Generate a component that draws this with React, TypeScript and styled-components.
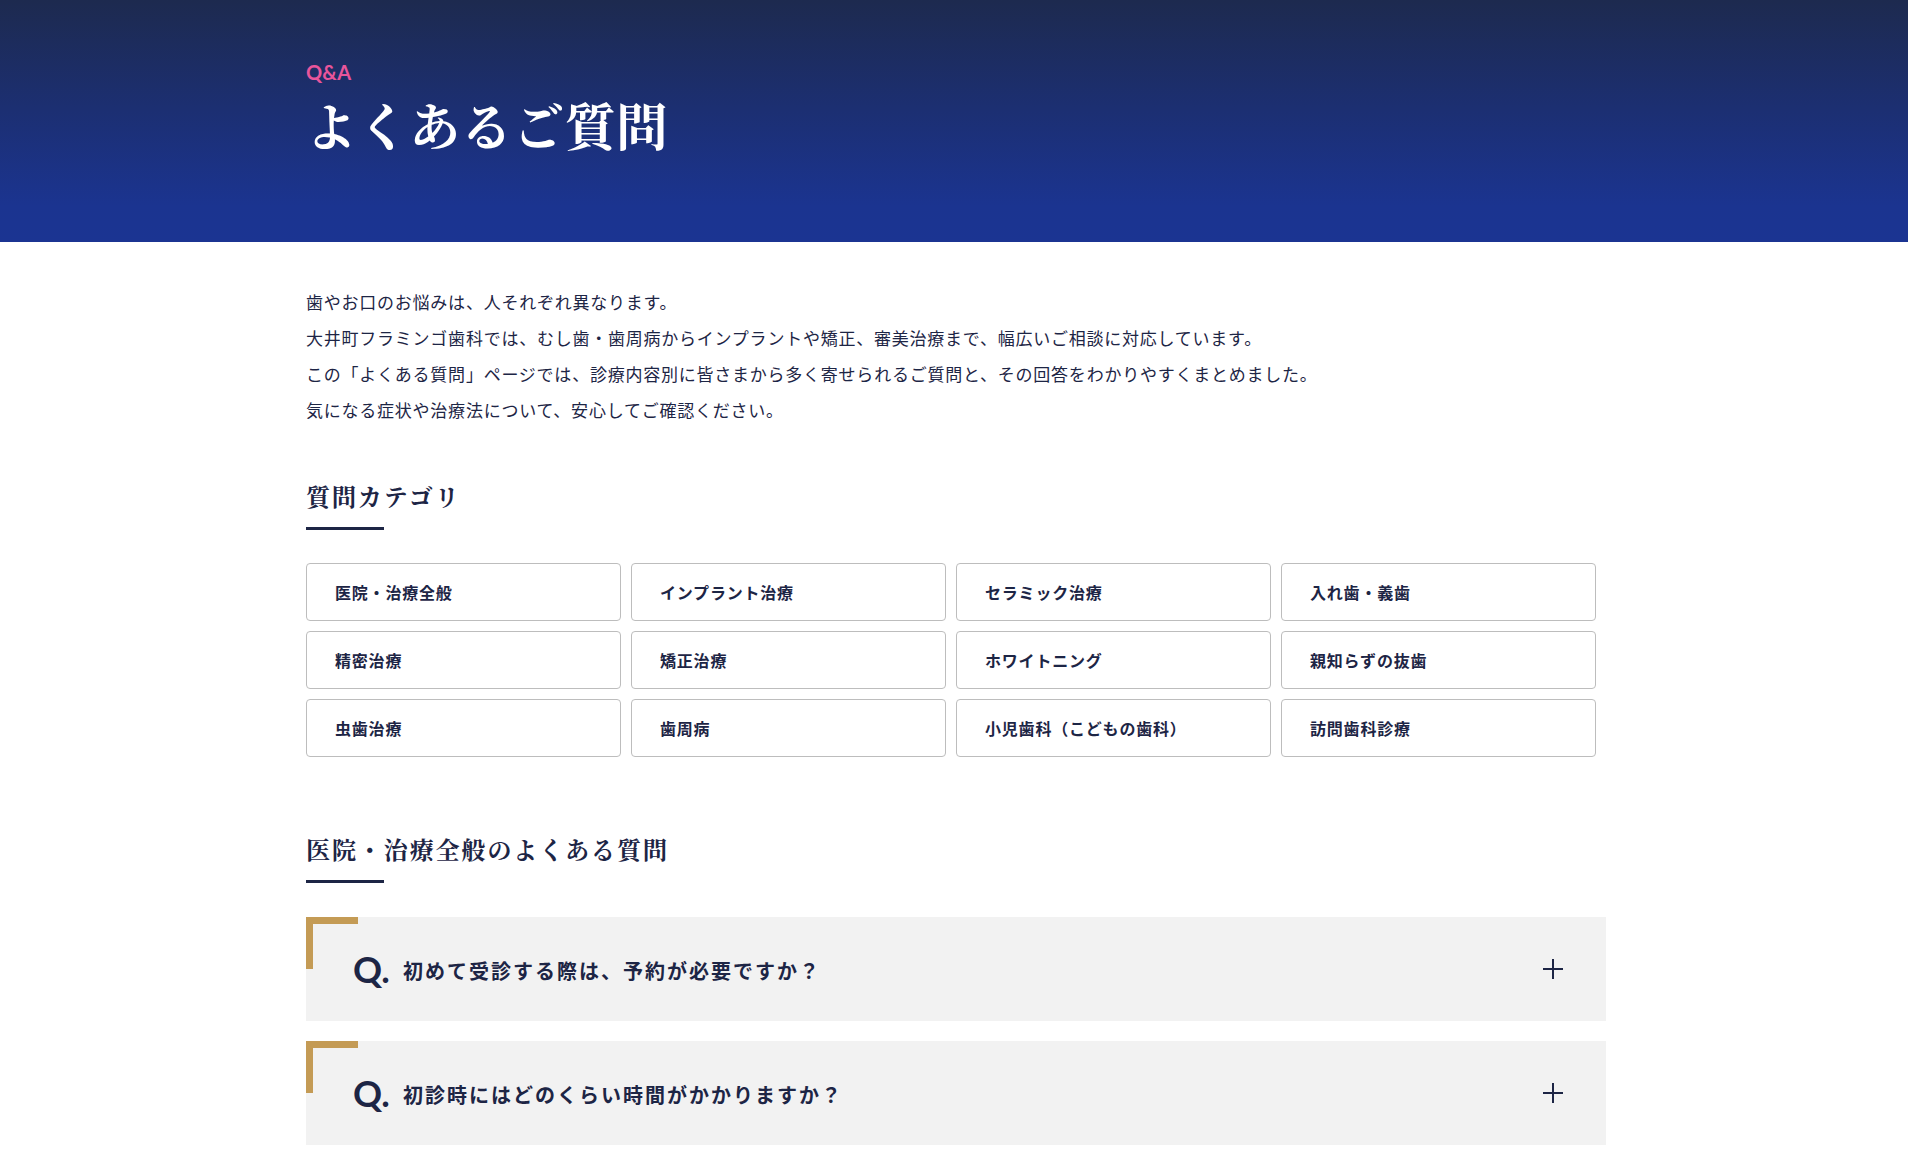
import React from "react";
import styled, { createGlobalStyle } from "styled-components";

const navy = "#1d2545";
const gold = "#c49b55";
const serif = `"Noto Serif CJK JP", "Noto Serif JP", "IPAMincho", "Hiragino Mincho ProN", "Yu Mincho", serif`;
const sans = `"Noto Sans CJK JP", "Noto Sans", sans-serif`;

const GlobalStyle = createGlobalStyle`
  html, body { margin: 0; padding: 0; background: #fff; }
  body { font-family: ${sans}; color: ${navy}; -webkit-font-smoothing: antialiased; }
  *, *::before, *::after { box-sizing: border-box; }
`;

const Hero = styled.header`
  height: 242px;
  padding-top: 60px;
  background: linear-gradient(180deg, #1d2a4f 0%, #1c2f72 45%, #1b3490 85%, #1b3492 100%);
`;

const Container = styled.div`
  width: 1300px;
  margin-left: calc(50% - 648px);
`;

const Eyebrow = styled.p`
  margin: 0;
  font-family: Lato, "Noto Sans", sans-serif;
  font-size: 20px;
  line-height: 24px;
  font-weight: 700;
  color: #e8559b;
`;

const HeroTitle = styled.h1`
  margin: 5px 0 0;
  font-family: ${serif};
  font-size: 51px;
  line-height: 70px;
  font-weight: 700;
  color: #fff;
  letter-spacing: 0.015em;
`;

const Main = styled(Container)`
  padding: 42px 0 12px;
`;

const Intro = styled.div`
  font-size: 17px;
  line-height: 36px;
  letter-spacing: 0.045em;
  font-weight: 400;
  p { margin: 0; }
`;

const SectionTitle = styled.h2<{ $mt: number }>`
  margin: ${(p) => p.$mt}px 0 0;
  font-family: ${serif};
  font-size: 24px;
  line-height: 36px;
  font-weight: 700;
  letter-spacing: 0.08em;
  color: ${navy};
  &::after {
    content: "";
    display: block;
    width: 78px;
    height: 3px;
    margin-top: 13px;
    background: ${navy};
  }
`;

const CategoryGrid = styled.div`
  display: grid;
  grid-template-columns: repeat(4, 315px);
  gap: 10px;
  margin-top: 33px;
`;

const CategoryButton = styled.button`
  height: 58px;
  display: flex;
  align-items: center;
  padding: 0 28px;
  background: #fff;
  border: 1px solid #bdbdbd;
  border-radius: 4px;
  font-family: ${sans};
  font-size: 16px;
  font-weight: 700;
  letter-spacing: 0.05em;
  color: ${navy};
  text-align: left;
  cursor: pointer;
`;

const FaqList = styled.div`
  display: flex;
  flex-direction: column;
  gap: 20px;
  margin-top: 34px;
`;

const FaqItem = styled.div`
  position: relative;
  background: #f2f2f2;
  &::before {
    content: "";
    position: absolute;
    top: 0;
    left: 0;
    width: 52px;
    height: 52px;
    border-top: 7px solid ${gold};
    border-left: 7px solid ${gold};
    pointer-events: none;
  }
`;

const FaqHead = styled.div`
  min-height: 104px;
  display: flex;
  align-items: center;
  padding: 0 43px 0 47px;
  cursor: pointer;
  color: ${navy};
`;

const QMark = styled.span`
  font-family: Lato, "Noto Sans", sans-serif;
  font-size: 36px;
  font-weight: 700;
  line-height: 1.3;
  color: ${navy};
`;

const QText = styled.span`
  flex: 1;
  margin-left: 13px;
  font-family: ${sans};
  font-size: 20px;
  line-height: 1.6;
  font-weight: 700;
  letter-spacing: 0.1em;
  padding-top: 4px;
`;

const Plus = () => (
  <svg width="20" height="20" viewBox="0 0 20 20" aria-hidden="true">
    <line x1="0" y1="10" x2="20" y2="10" stroke={navy} strokeWidth="2" />
    <line x1="10" y1="0" x2="10" y2="20" stroke={navy} strokeWidth="2" />
  </svg>
);

const categories = [
  "医院・治療全般",
  "インプラント治療",
  "セラミック治療",
  "入れ歯・義歯",
  "精密治療",
  "矯正治療",
  "ホワイトニング",
  "親知らずの抜歯",
  "虫歯治療",
  "歯周病",
  "小児歯科（こどもの歯科）",
  "訪問歯科診療",
];

const questions = [
  "初めて受診する際は、予約が必要ですか？",
  "初診時にはどのくらい時間がかかりますか？",
];

export default function App() {
  return (
    <>
      <GlobalStyle />
      <Hero>
        <Container>
          <Eyebrow>Q&amp;A</Eyebrow>
          <HeroTitle>よくあるご質問</HeroTitle>
        </Container>
      </Hero>
      <Main as="main">
        <Intro>
          <p>歯やお口のお悩みは、人それぞれ異なります。</p>
          <p>大井町フラミンゴ歯科では、むし歯・歯周病からインプラントや矯正、審美治療まで、幅広いご相談に対応しています。</p>
          <p>この「よくある質問」ページでは、診療内容別に皆さまから多く寄せられるご質問と、その回答をわかりやすくまとめました。</p>
          <p>気になる症状や治療法について、安心してご確認ください。</p>
        </Intro>

        <SectionTitle $mt={50}>質問カテゴリ</SectionTitle>
        <CategoryGrid>
          {categories.map((c) => (
            <CategoryButton key={c}>{c}</CategoryButton>
          ))}
        </CategoryGrid>

        <SectionTitle $mt={74}>医院・治療全般のよくある質問</SectionTitle>
        <FaqList>
          {questions.map((q) => (
            <FaqItem key={q}>
              <FaqHead role="button">
                <QMark>Q.</QMark>
                <QText>{q}</QText>
                <Plus />
              </FaqHead>
            </FaqItem>
          ))}
        </FaqList>
      </Main>
    </>
  );
}
